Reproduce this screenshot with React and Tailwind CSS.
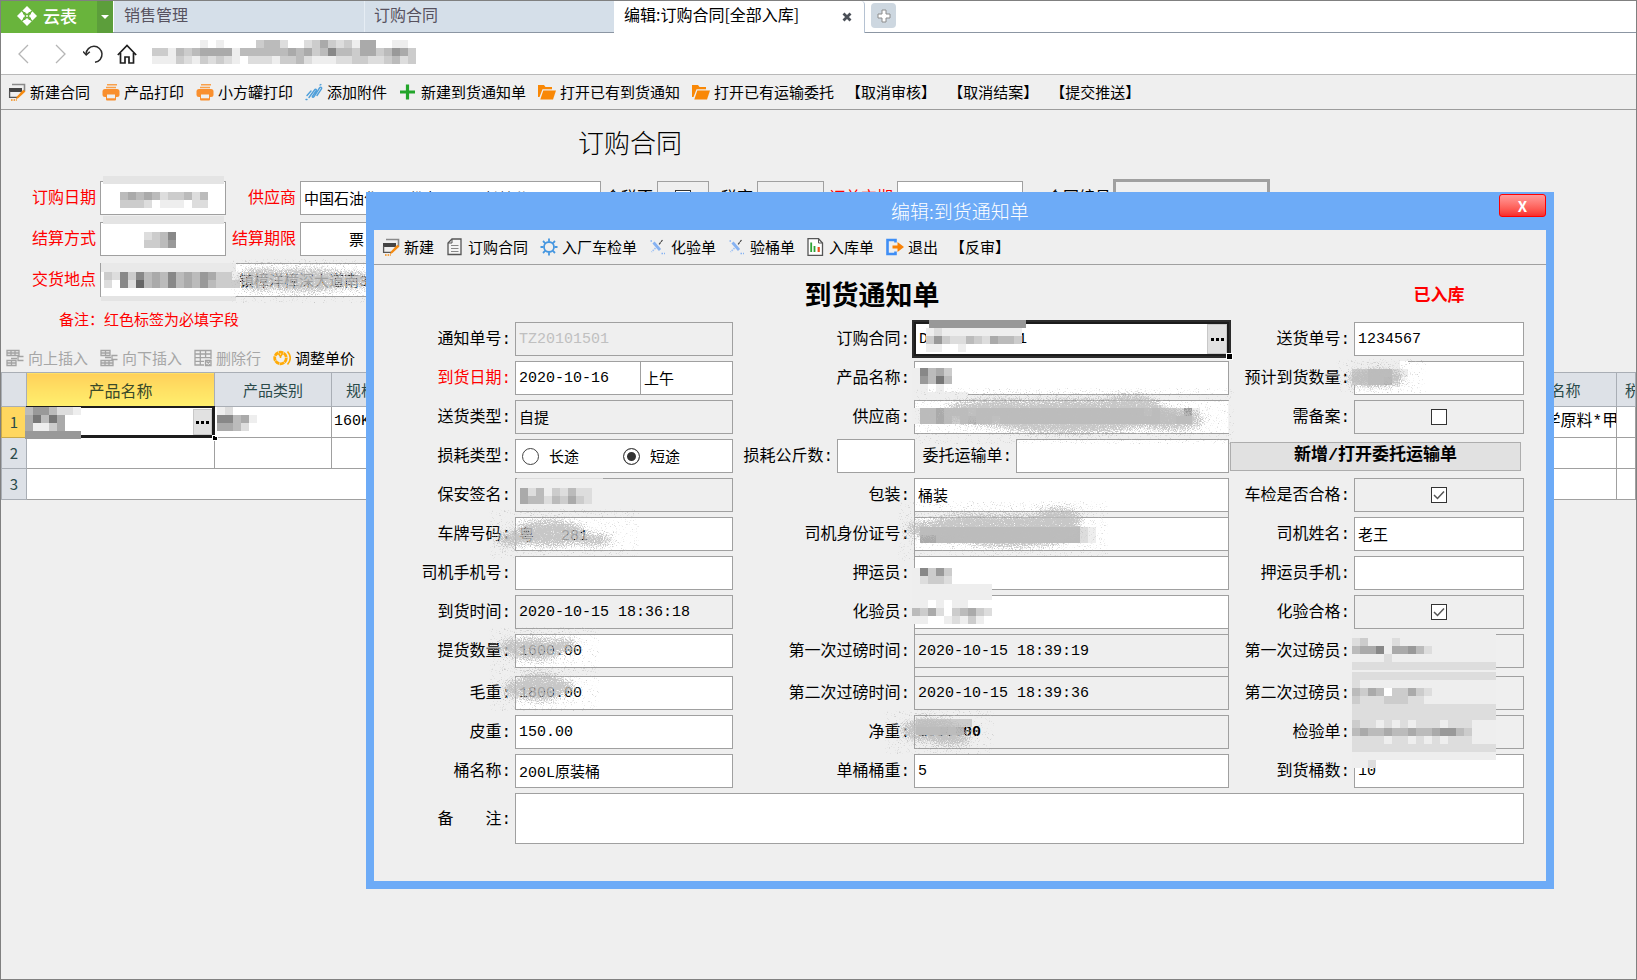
import React, { useId } from 'react';
import clsx from 'clsx';

const SANS = "font-['Noto_Sans_CJK_SC',sans-serif]";
const MONO = "font-['Liberation_Mono','Noto_Sans_CJK_SC',monospace]";

/* ---------- icons ---------- */

function EditIcon() {
  return (
    <svg viewBox="0 0 18 18" className="size-[18px] shrink-0">
      <path d="M4 1.5h12.5V8" fill="none" stroke="#8a8a8a" strokeWidth="1.6" />
      <path d="M1 5h13v4H1z" fill="#444" />
      <path d="M1.6 8v6.4H9M13.4 8v1.5" fill="none" stroke="#555" strokeWidth="1.3" />
      <path d="M17.500 8.500l-7 6.500-2.500 1.200.9-2.800L15.300 6.700z" fill="#f58a10" />
      <path d="M3 17h6" stroke="#f58a10" strokeWidth="1.4" strokeDasharray="1.6 1" />
    </svg>
  );
}

function PrinterIcon() {
  return (
    <svg viewBox="0 0 18 18" className="size-[18px] shrink-0">
      <path d="M5 1.7h10M4 4.5h10" stroke="#f9a04a" strokeWidth="1.4" />
      <rect x="0.5" y="6" width="17" height="8" rx="2.5" fill="#f98f2e" />
      <rect x="4" y="10" width="10" height="7.5" rx="1" fill="#f98f2e" />
      <path d="M5 11.5h8v3.8H5z" fill="#efefef" />
    </svg>
  );
}

function ClipIcon() {
  return (
    <svg viewBox="0 0 18 18" className="size-[18px] shrink-0" fill="none" stroke="#4f9fda" strokeWidth="1.4" strokeLinecap="round">
      <path d="M2 12.5L6 8M4 14.5L9.500 7c1-1.500 2.500-.5 1.500 1L7.500 13c-.6 1.200.6 1.800 1.400.8L14.500 5c1-1.500 2.800-.4 1.800 1.200L12 12.500" />
      <path d="M1 16.5h2M15 2l1.500-.8" strokeDasharray="1 1.5" />
    </svg>
  );
}

function PlusIcon() {
  return (
    <svg viewBox="0 0 18 18" className="size-[18px] shrink-0">
      <path d="M8.500 1.500v15M1 9h15" stroke="#22a52a" strokeWidth="3.200" />
    </svg>
  );
}

function FolderIcon() {
  return (
    <svg viewBox="0 0 18 18" className="size-[18px] shrink-0" fill="#f98806">
      <path d="M0 2h6l1.500 2H14v2.200H4.500L1.500 14H0z" />
      <path d="M5.300 7.500H18l-3 9H2.300z" />
    </svg>
  );
}

function SheetIcon() {
  return (
    <svg viewBox="0 0 18 18" className="size-[18px] shrink-0" fill="none">
      <path d="M6 1h9v15.500H2V5z" fill="#f4f4f4" stroke="#555" strokeWidth="1.300" />
      <path d="M6 1v4H2" stroke="#555" />
      <path d="M5 7.500h7.500M5 10.500h7.500M5 13.500h7.500" stroke="#888" />
    </svg>
  );
}

function GearIcon() {
  return (
    <svg viewBox="0 0 18 18" className="size-[18px] shrink-0" fill="none" stroke="#4697e0">
      <circle cx="9" cy="9" r="5" strokeWidth="1.800" />
      <path d="M9 0.500v3M9 14.500v3M0.500 9h3M14.500 9h3M3 3l2.300 2.300M12.700 12.700L15 15M15 3l-2.300 2.300M5.300 12.700L3 15" strokeWidth="1.800" />
    </svg>
  );
}

function ToolsIcon() {
  return (
    <svg viewBox="0 0 18 18" className="size-[18px] shrink-0" fill="none">
      <path d="M4.500 4.500l6.500 7.500" stroke="#86b2f2" strokeWidth="2.800" />
      <path d="M13.500 2L10 6.500" stroke="#444" strokeWidth="1.200" strokeDasharray="2.500 .5" />
      <path d="M6.500 10L2.500 14" stroke="#9ec1f3" strokeWidth="1.600" strokeDasharray="1.500 1" />
      <path d="M1.500 3h2.500M12.500 15.500h3.500" stroke="#86b2f2" strokeWidth="1.400" strokeDasharray="1.500 1" />
    </svg>
  );
}

function ReportIcon() {
  return (
    <svg viewBox="0 0 18 18" className="size-[18px] shrink-0" fill="none">
      <path d="M1 .700h10.500L15.500 5v12.300H1z" fill="#fff" stroke="#555" strokeWidth="1.300" />
      <path d="M11.500 .700V5h4" stroke="#555" />
      <path d="M4.200 4.500V14M7.500 8v6" stroke="#2da336" strokeWidth="1.800" />
      <path d="M11.700 9v5" stroke="#e8501c" strokeWidth="2.200" />
    </svg>
  );
}

function ExitIcon() {
  return (
    <svg viewBox="0 0 18 18" className="size-[18px] shrink-0">
      <path d="M9.500 4.500V2H1.500v14h8v-2.500" fill="none" stroke="#3f8ef5" strokeWidth="2.600" />
      <path d="M6.500 7.500h5V4L18 9l-6.500 5v-3.500h-5z" fill="#f98206" />
    </svg>
  );
}

function InsertIcon({ flip }) {
  return (
    <svg viewBox="0 0 18 18" className={clsx('size-[18px] shrink-0', flip && '-scale-y-100')} fill="none" stroke="#a3a3a3" strokeWidth="1.300">
      <path d="M1 1.500h12v5H1zM1 4h12M5 1.500v5M9 1.500v5M1 11.500h9v5H1zM1 14h9M5.500 11.500v5M17.500 7.500H12v4h5.500M11 9.500H5" />
    </svg>
  );
}

function DeleteRowIcon() {
  return (
    <svg viewBox="0 0 18 18" className="size-[18px] shrink-0" fill="none" stroke="#a3a3a3" strokeWidth="1.300">
      <path d="M10 16H1V1.500h16V10M1 5h16M1 8.700h16M1 12.400h9M6.300 1.500V16M11.600 1.500V9" />
      <path d="M11.500 11.500h5.500v5h-5.500zM12.500 12.500l3.500 3M16 12.500l-3.500 3" />
    </svg>
  );
}

function CoinIcon() {
  return (
    <svg viewBox="0 0 18 18" className="size-[18px] shrink-0" fill="none" stroke="#ffab08">
      <circle cx="7.500" cy="9" r="5.800" strokeWidth="2.800" strokeDasharray="4.500 .5" />
      <path d="M5.500 4.500L7.500 7.500l2-3M7.500 7v2" strokeWidth="1.600" />
      <path d="M14.500 2.500c3.400 4 3.400 9 0 13" strokeWidth="1.600" />
    </svg>
  );
}

function LogoIcon() {
  return (
    <svg viewBox="0 0 20 20" className="size-5">
      <path d="M10 0l10 10-10 10L0 10z" fill="#fff" />
      <g fill="none" stroke="#69b43c" strokeWidth="1.400">
        <path d="M7.500 6a2.500 2.500 0 0 0 5 0M7.500 14a2.500 2.500 0 0 1 5 0" />
        <path d="M6 7.500a2.500 2.500 0 0 1 0 5M14 7.500a2.500 2.500 0 0 0 0 5" />
        <path d="M5 5l3 3M15 5l-3 3M5 15l3-3M15 15l-3-3" />
      </g>
    </svg>
  );
}

/* ---------- masked values ---------- */

// One hex digit per 8px tile, "." leaves the tile clear.
function Mosaic({ rows, className }) {
  const width = Math.max(...rows.map((row) => row.length)) * 8;
  return (
    <svg
      aria-hidden="true"
      width={width}
      height={rows.length * 8}
      shapeRendering="crispEdges"
      className={clsx('pointer-events-none absolute max-w-none', className)}
    >
      {rows.map((row, y) =>
        [...row].map((c, x) =>
          c === '.' ? null : <rect key={`${x}-${y}`} x={x * 8} y={y * 8} width="8" height="8" fill={`#${c}${c}${c}`} />
        )
      )}
    </svg>
  );
}

function Smudge({ width, height, blobs, className }) {
  const id = useId();
  return (
    <svg aria-hidden="true" width={width} height={height} className={clsx('pointer-events-none absolute max-w-none', className)}>
      <filter id={id} x="0" y="0" width={width} height={height} filterUnits="userSpaceOnUse">
        <feGaussianBlur in="SourceAlpha" stdDeviation="5" result="soft" />
        <feTurbulence type="fractalNoise" baseFrequency="0.9" numOctaves="2" />
        <feColorMatrix values="0 0 0 0 0  0 0 0 0 0  0 0 0 0 0  1 0 0 0 0" result="noise" />
        <feComposite in="soft" in2="noise" operator="arithmetic" k2="2" k3="4" k4="-2.500" result="grain" />
        <feFlood floodColor="#bdbdbd" floodOpacity="0.85" />
        <feComposite in2="grain" operator="in" />
      </filter>
      <g filter={`url(#${id})`}>
        {blobs.map(([cx, cy, rx, ry]) => (
          <ellipse key={`${cx}-${cy}`} cx={cx} cy={cy} rx={rx} ry={ry} />
        ))}
      </g>
    </svg>
  );
}

function Band({ className }) {
  return <span aria-hidden="true" className={clsx('pointer-events-none absolute', className)} />;
}

/* ---------- form parts ---------- */

const boxStyle = 'border border-[#a0a0a0] h-[34px]';

function Label({ htmlFor, required, children, className }) {
  return (
    <label
      htmlFor={htmlFor}
      className={clsx('self-center whitespace-pre pr-1 pt-[2px] text-right text-[16px] leading-5', MONO, required && 'text-[#ff0000]', className)}
    >
      {children}
    </label>
  );
}

function Field({ label, value = '', readOnly, required, faded, bold, joined, active, thick, children }) {
  const id = useId();
  return (
    <>
      <Label htmlFor={id} required={required}>{label}</Label>
      <div
        className={clsx(
          'relative flex min-w-0',
          joined === 'near' && 'after:absolute after:inset-x-0 after:top-full after:h-[5px] after:border-x after:border-[#a0a0a0]',
          joined === 'far' && 'after:absolute after:inset-x-0 after:top-full after:h-[8px] after:border-x after:border-[#a0a0a0]'
        )}
      >
        <input
          id={id}
          defaultValue={value}
          readOnly={readOnly}
          className={clsx(
            'w-full h-[34px] min-w-0 px-[3px] text-[15px] outline-none',
            MONO,
            active ? 'border-2 border-[#1c1c1c] ring-2 ring-[#2c2c2c]' : 'border border-[#a0a0a0]',
            readOnly ? 'bg-[#efefef]' : 'bg-white',
            faded && 'text-[#c0c0c0]',
            bold && 'font-bold',
            thick && 'ring-2 ring-[#a0a0a0]'
          )}
        />
        {children}
      </div>
    </>
  );
}

function CheckBox({ id, checked }) {
  return (
    <span className="relative flex size-4">
      <input id={id} type="checkbox" defaultChecked={checked} className="peer size-4 appearance-none border border-[#333] bg-white" />
      <svg viewBox="0 0 16 16" className="pointer-events-none absolute inset-0 hidden size-4 peer-checked:block">
        <path d="M3 8l3.500 3.500L13 4.500" fill="none" stroke="#555" strokeWidth="1.500" />
      </svg>
    </span>
  );
}

function CheckField({ label, checked }) {
  const id = useId();
  return (
    <>
      <Label htmlFor={id}>{label}</Label>
      <div className={clsx('flex items-center justify-center', boxStyle)}>
        <CheckBox id={id} checked={checked} />
      </div>
    </>
  );
}

function Row({ className, children }) {
  return (
    <div className={clsx('grid grid-cols-[141px_218fr_181px_315fr_125px_170fr]', className)}>
      {children}
    </div>
  );
}

function EllipsisButton({ className }) {
  return (
    <button
      type="button"
      aria-label="选择"
      className={clsx('absolute flex items-center justify-center gap-[2px] border border-[#c8c8c8] bg-[#e1e1e1]', className)}
    >
      <i className="size-[3px] bg-black" />
      <i className="size-[3px] bg-black" />
      <i className="size-[3px] bg-black" />
    </button>
  );
}

function Toolbar({ items, className }) {
  return (
    <div className={clsx('flex items-center gap-3', className)}>
      {items.map(({ text, icon, disabled }) => (
        <button
          key={text}
          type="button"
          disabled={disabled}
          className={clsx('flex items-center gap-1 whitespace-nowrap text-[15px] leading-5', disabled && 'text-[#a6a6a6]')}
        >
          {icon}
          {text}
        </button>
      ))}
    </div>
  );
}

const contractTools = [
  { text: '新建合同', icon: <EditIcon /> },
  { text: '产品打印', icon: <PrinterIcon /> },
  { text: '小方罐打印', icon: <PrinterIcon /> },
  { text: '添加附件', icon: <ClipIcon /> },
  { text: '新建到货通知单', icon: <PlusIcon /> },
  { text: '打开已有到货通知', icon: <FolderIcon /> },
  { text: '打开已有运输委托', icon: <FolderIcon /> },
  { text: '【取消审核】' },
  { text: '【取消结案】' },
  { text: '【提交推送】' },
];

const rowTools = [
  { text: '向上插入', icon: <InsertIcon />, disabled: true },
  { text: '向下插入', icon: <InsertIcon flip />, disabled: true },
  { text: '删除行', icon: <DeleteRowIcon />, disabled: true },
  { text: '调整单价', icon: <CoinIcon /> },
];

const noticeTools = [
  { text: '新建', icon: <EditIcon /> },
  { text: '订购合同', icon: <SheetIcon /> },
  { text: '入厂车检单', icon: <GearIcon /> },
  { text: '化验单', icon: <ToolsIcon /> },
  { text: '验桶单', icon: <ToolsIcon /> },
  { text: '入库单', icon: <ReportIcon /> },
  { text: '退出', icon: <ExitIcon /> },
  { text: '【反审】' },
];

/* ---------- page sections ---------- */

function TabBar() {
  return (
    <div className="flex h-8 text-[16px]">
      <button type="button" className="flex w-24 items-center gap-[6px] bg-[#69b43c] pb-[2px] pl-4 text-[17px] font-medium text-white">
        <LogoIcon />
        云表
      </button>
      <button type="button" aria-label="菜单" className="flex w-4 items-center justify-center bg-[#5c9e3b]">
        <i className="border-x-[4px] border-t-[4px] border-x-transparent border-t-white" />
      </button>
      <div className="flex flex-1 border-b border-[#8c96a3]">
        <a href="#sales" className="ml-px flex w-[250px] items-center bg-[#d5dfe9] pl-[10px] pb-[6px] text-[#57525f]">销售管理</a>
        <a href="#contract" className="flex w-[250px] items-center border-l border-[#e6edf4] bg-[#d5dfe9] pl-[9px] pb-[6px] text-[#57525f]">订购合同</a>
        <div className="-mb-px flex w-[251px] items-center justify-between rounded-tr border-r border-[#b5c2d2] bg-white pb-[6px] pl-[10px] pr-3">
          <a href="#edit">编辑:订购合同[全部入库]</a>
          <button type="button" aria-label="关闭标签" className="mt-[6px]">
            <svg viewBox="0 0 10 10" className="size-[10px]">
              <path d="M1.500 1.500l7 7M8.500 1.500l-7 7" stroke="#4a4f57" strokeWidth="2.800" />
            </svg>
          </button>
        </div>
        <button type="button" aria-label="新标签" className="ml-[6px] mt-[2px] flex size-[25px] items-center justify-center rounded bg-[#cdd7e0]">
          <svg viewBox="0 0 14 14" className="size-[14px]">
            <path d="M5 1h4v4h4v4H9v4H5V9H1V5h4z" fill="#fff" stroke="#8c8c8c" />
          </svg>
        </button>
      </div>
    </div>
  );
}

function AddressBar() {
  return (
    <div className="relative flex h-[42px] items-center border-b border-[#b9b9b9]">
      <button type="button" aria-label="后退" className="ml-4">
        <svg viewBox="0 0 12 20" className="h-5 w-3" fill="none" stroke="#b5b5b5" strokeWidth="1.300">
          <path d="M11 1L2 10l9 9" />
        </svg>
      </button>
      <button type="button" aria-label="前进" className="ml-[26px]">
        <svg viewBox="0 0 12 20" className="h-5 w-3" fill="none" stroke="#b5b5b5" strokeWidth="1.300">
          <path d="M1 1l9 9-9 9" />
        </svg>
      </button>
      <button type="button" aria-label="刷新" className="ml-4">
        <svg viewBox="0 0 20 20" className="size-5" fill="none" stroke="#2b2b2b" strokeWidth="1.500">
          <path d="M3 10a8 8 0 1 1 9 8.300" />
          <path d="M0 7.500L3.200 11 6.800 7.800" />
        </svg>
      </button>
      <button type="button" aria-label="主页" className="ml-[14px]">
        <svg viewBox="0 0 20 20" className="size-5" fill="none" stroke="#1f1f1f" strokeWidth="1.700">
          <path d="M.800 11L10 1.500 19.200 11M3.500 9v10H8v-6h4v6h4.500V9" />
        </svg>
      </button>
      <Mosaic
        className="left-[151px] top-[7px]"
        rows={[
          'ffffffefeffffcbbdffdcacdceaaffeef',
          'ccebcbaaaaebbbbbbabacb8bbcaacb9ac',
          'eeecdecdcdefdddeccbdeeeddccddcbdc',
        ]}
      />
    </div>
  );
}

function ContractForm() {
  return (
    <div>
      <h1 className="mt-[17px] mb-[24px] w-[1258px] text-center text-[26px] font-light leading-[30px]">订购合同</h1>
      <div className="flex flex-col gap-[7px]">
        <div className="grid grid-cols-[99px_126px_74px_301px_56px_52px_48px_67px_73px_126px_92px_153px]">
          <Field label="订购日期" required>
            <Band className="-top-[5px] left-[3px] h-2 w-[121px] bg-[#e4e4e4]" />
            <Mosaic className="left-5 top-[11px]" rows={['bababdccbdb', 'cccdfeeefdd']} />
          </Field>
          <Field label="供应商" required value="中国石油化工股份有限公司长岭分公司" />
          <CheckField label="含税否" />
          <Field label="税率" readOnly />
          <Field label="订单交期" required />
          <Field label="合同编号" readOnly thick />
        </div>
        <div className="grid grid-cols-[99px_126px_74px_301px]">
          <Field label="结算方式" required>
            <Band className="-top-[6px] left-[3px] h-2 w-[121px] bg-[#e4e4e4]" />
            <Mosaic className="left-11 top-[10px]" rows={['dcb8f', 'ccb9f']} />
          </Field>
          <Field label="结算期限" required value="     票" />
        </div>
        <div className="grid grid-cols-[99px_501px]">
          <Field label="交货地点" required value="　　　　　　　　　镇樟洋樟深大道南3">
            <Band className="top-0 left-px h-[9px] w-[135px] bg-[#e9e9e9]" />
            <Mosaic className="left-1 top-[9px]" rows={['cd8c8bab8bab9acce', 'df8d6bab8bab9bccc']} />
            <Band className="top-[33px] left-px h-[5px] w-[135px] bg-[#e4e4e4]" />
            <Smudge width={150} height={44} className="-top-1 left-[130px]" blobs={[[30, 20, 22, 11], [75, 21, 52, 11], [125, 21, 16, 8]]} />
          </Field>
        </div>
      </div>
      <p className="mt-3 pl-[58px] text-[15px] leading-5 text-[#ff0000]">备注：红色标签为必填字段</p>
      <Toolbar items={rowTools} className="mt-[15px] h-7 pl-[5px]" />
    </div>
  );
}

function ProductTable() {
  const headColors = 'border border-[#a9aeb5] bg-[#dde1e7] p-0 font-normal text-[#2b4a4a]';
  const head = clsx('h-[34px]', headColors);
  const rowHead = clsx('h-[31px]', headColors, SANS);
  const cell = 'h-[31px] border border-[#a0a0a0] bg-white p-0';
  return (
    <table className="w-full table-fixed border-collapse text-[15px] leading-5">
      <colgroup>
        <col className="w-[25px]" />
        <col className="w-[188px]" />
        <col className="w-[117px]" />
        <col className="w-[120px]" />
        <col />
        <col className="w-[132px]" />
        <col className="w-[19px]" />
      </colgroup>
      <thead>
        <tr>
          <th className={head} />
          <th className="h-[34px] border border-[#a9aeb5] bg-gradient-to-b from-[#ffd05a] to-[#fff06e] p-0 text-[16px] font-normal text-[#3a4a2a]">产品名称</th>
          <th className={head}>产品类别</th>
          <th className={clsx(head, 'pl-[14px] text-left')}>规格</th>
          <th className={head} />
          <th className={head}>税收名称</th>
          <th className={clsx(head, 'overflow-hidden whitespace-nowrap pl-2 text-left')}>税率</th>
        </tr>
      </thead>
      <tbody className={MONO}>
        <tr>
          <th className={clsx('h-[31px] border border-[#c9a94a] bg-[#ffd75f] p-0 font-normal text-[#2b4a4a]', SANS)}>1</th>
          <td className={clsx(cell, 'relative')}>
            <span className="absolute -inset-px border-2 border-l-0 border-b-[3px] border-r-[3px] border-[#1c1c1c]" />
            <EllipsisButton className="right-0.5 top-0.5 bottom-0.5 w-[19px]" />
            <Mosaic className="-left-[2px] top-0" rows={['b99bdde', 'a7b7aff', 'aeecaff', '9999999']} />
            <span className="absolute -right-1 -bottom-1 size-[6px] border border-white bg-black" />
          </td>
          <td className={clsx(cell, 'relative')}>
            <Mosaic className="left-[2px] top-0" rows={['edfff', '88bae', 'aabdf']} />
          </td>
          <td className={clsx(cell, 'pl-[2px]')}>160KG</td>
          <td className={cell} />
          <td className={clsx(cell, 'overflow-hidden whitespace-nowrap pl-[2px] text-[16px]')}>*有机化学原料*甲醇</td>
          <td className={cell} />
        </tr>
        <tr>
          <th className={rowHead}>2</th>
          <td className={cell} />
          <td className={cell} />
          <td className={cell} />
          <td className={cell} />
          <td className={cell} />
          <td className={cell} />
        </tr>
        <tr>
          <th className={rowHead}>3</th>
          <td colSpan={5} className={cell} />
          <td className={cell} />
        </tr>
      </tbody>
    </table>
  );
}

function LossRow() {
  const weightId = useId();
  const orderId = useId();
  return (
    <Row>
      <Label>损耗类型:</Label>
      <div role="radiogroup" aria-label="损耗类型" className={clsx('flex items-center bg-white pl-[6px] text-[15px]', boxStyle)}>
        {['长途', '短途'].map((name) => (
          <label key={name} className="flex w-[101px] items-center gap-[10px]">
            <input
              type="radio"
              name="distance"
              defaultChecked={name === '短途'}
              className="size-[17px] appearance-none rounded-full border border-[#444] bg-white checked:bg-[#333] checked:shadow-[inset_0_0_0_3px_#fff]"
            />
            {name}
          </label>
        ))}
      </div>
      <div className="flex">
        <Label htmlFor={weightId} className="w-[104px]">损耗公斤数:</Label>
        <input id={weightId} className={clsx('-mr-px min-w-0 flex-1 bg-white', boxStyle)} />
      </div>
      <div className="flex">
        <Label htmlFor={orderId} className="w-[102px]">委托运输单:</Label>
        <input id={orderId} className={clsx('min-w-0 flex-1 bg-white', boxStyle)} />
      </div>
      <button
        type="button"
        className={clsx('col-span-2 ml-px mr-[3px] h-[29px] self-center border border-[#adadad] bg-[#e1e1e1] text-[17px] font-bold leading-5', MONO)}
      >
        新增/打开委托运输单
      </button>
    </Row>
  );
}

function NoticeDialog() {
  const remarkId = useId();
  return (
    <section
      role="dialog"
      aria-labelledby="notice-title"
      className="absolute left-[365px] right-[82px] top-[191px] bg-[#6dabf7] px-2 pb-2"
    >
      <header className="relative flex h-[38px] items-center justify-center">
        <h2 id="notice-title" className="text-[19px] font-light text-white">编辑:到货通知单</h2>
        <button
          type="button"
          aria-label="关闭"
          className="absolute right-0 top-0.5 h-[23px] w-[47px] rounded-[3px] border border-[#ff0000] bg-gradient-to-b from-[#ff9a9a] to-[#f92a2a] text-[15px] font-bold leading-5 text-white"
        >
          X
        </button>
      </header>
      <div className="bg-[#efefef]">
        <Toolbar items={noticeTools} className="h-[35px] border-b border-[#a0a0a0] pl-2" />
        <form className="flex flex-col gap-[5px] pr-[22px] pt-[6px] pb-[37px]">
          <Row>
            <h3 className="col-span-3 col-start-2 h-[46px] text-center text-[27px] font-bold leading-[46px]">到货通知单</h3>
            <p className="col-start-6 text-center text-[17px] font-bold leading-[46px] text-[#ff0000]">已入库</p>
          </Row>
          <Row>
            <Field label="通知单号:" value="TZ20101501" readOnly faded />
            <Field label="订购合同:" value="DC         1" active>
              <Band className="-top-[2px] left-[15px] h-2 w-[97px] bg-[#989898]" />
              <Mosaic className="left-[12px] top-[6px]" rows={['edeeeeeeeeee', 'c9cddbcdabbc', 'eeffefffffff']} />
              <EllipsisButton className="right-[2px] top-[2px] bottom-[2px] w-5" />
              <span className="absolute -right-1 -bottom-1 size-[7px] border border-white bg-black" />
            </Field>
            <Field label="送货单号:" value="1234567" />
          </Row>
          <Row>
            <Label htmlFor="arrive-date" required>到货日期:</Label>
            <div className="grid grid-cols-[125fr_93fr]">
              <input id="arrive-date" defaultValue="2020-10-16" className={clsx('min-w-0 border-r-0 bg-white px-[3px] text-[15px]', boxStyle, MONO)} />
              <input aria-label="时段" defaultValue="上午" className={clsx('min-w-0 bg-white px-[3px] text-[15px]', boxStyle, MONO)} />
            </div>
            <Field label="产品名称:">
              <Mosaic className="-left-[2px] top-[7px]" rows={['e8bac', 'e9b7b', 'eefef', 'eeeeeee']} />
            </Field>
            <Field label="预计到货数量:">
              <Mosaic className="-left-[2px] top-0" rows={['eeeeeef', 'ccbbbde', 'ccbbaef']} />
              <Smudge width={90} height={34} className="-left-[18px] -top-[2px]" blobs={[[40, 19, 30, 9]]} />
            </Field>
          </Row>
          <Row>
            <Field label="送货类型:" value="自提" readOnly />
            <Field label="供应商:">
              <Mosaic
                className="-left-[2px] top-[8px]"
                rows={['ebbabbbcbbbbbbbbbbbbbbbbbbbbbcbccd9e', 'ebbabcbabbcbbbbbbbbbbbbbbbbbbbbccbbf']}
              />
              <Smudge width={320} height={56} className="-top-3 left-0" blobs={[[85, 24, 55, 13], [155, 28, 95, 17], [215, 22, 35, 15], [255, 32, 36, 10]]} />
              <Band className="right-0 top-px h-8 w-px bg-[#f4f4f4]" />
            </Field>
            <CheckField label="需备案:" />
          </Row>
          <LossRow />
          <Row>
            <Field label="保安签名:" readOnly>
              <Band className="left-[2px] top-0 h-px w-[86px] bg-[#dcdcdc]" />
              <Mosaic className="left-[5px] top-[10px]" rows={['adbecdbdd', 'abbdbcacd']} />
            </Field>
            <Field label="包装:" value="桶装" joined="near" />
            <CheckField label="车检是否合格:" checked />
          </Row>
          <Row>
            <Field label="车牌号码:" value="粤   281">
              <Smudge width={150} height={50} className="-left-[26px] -top-2" blobs={[[60, 24, 36, 13], [24, 30, 18, 7], [104, 31, 20, 6]]} />
            </Field>
            <Field label="司机身份证号:" joined="near">
              <Mosaic className="left-[6px] top-[10px]" rows={['bbbbbbbbbbbbbbbbbbbbde', 'aabbbbbbbbbbbbbbbbbbde']} />
              <Smudge width={210} height={60} className="-left-4 -top-4" blobs={[[75, 26, 48, 13], [115, 30, 66, 16], [160, 18, 24, 11], [24, 28, 16, 8]]} />
            </Field>
            <Field label="司机姓名:" value="老王" />
          </Row>
          <Row>
            <Field label="司机手机号:" />
            <Field label="押运员:">
              <Mosaic className="-left-[2px] top-[12px]" rows={['e8c9c', 'edccd', 'eeeeeeeeee', 'eeeeeeeeee']} />
            </Field>
            <Field label="押运员手机:" />
          </Row>
          <Row>
            <Field label="到货时间:" value="2020-10-15 18:36:18" readOnly />
            <Field label="化验员:" joined="near">
              <Band className="-left-[2px] -top-[5px] h-[10px] w-20 bg-[#eeeeee]" />
              <Mosaic className="-left-[2px] top-[5px]" rows={['eefefeefff', 'bcadfcbacd', 'eeffedecef']} />
            </Field>
            <CheckField label="化验合格:" checked />
          </Row>
          <Row>
            <Field label="提货数量:" value="1600.00">
              <Smudge width={110} height={44} className="-left-[26px] -top-[7px]" blobs={[[46, 22, 28, 11], [24, 20, 14, 8], [76, 18, 12, 7]]} />
            </Field>
            <Field label="第一次过磅时间:" value="2020-10-15 18:39:19" readOnly joined="far" />
            <Field label="第一次过磅员:" readOnly>
              <Mosaic
                className="-left-[2px] -top-[4px]"
                rows={['eeeeeeeeeeeeeeeeee', 'dceeedeeeeeeeeeeee', 'baa8eaa9bdeeeeeeee', 'eeeedeeeeeeeeeeeee', 'dddddddddddddddddd']}
              />
            </Field>
          </Row>
          <Row className="pt-[3px]">
            <Field label="毛重:" value="1800.00">
              <Smudge width={110} height={44} className="-left-[26px] -top-[9px]" blobs={[[50, 20, 26, 14], [26, 22, 12, 8], [76, 20, 10, 7]]} />
            </Field>
            <Field label="第二次过磅时间:" value="2020-10-15 18:39:36" readOnly />
            <Field label="第二次过磅员:" readOnly>
              <Mosaic
                className="-left-[2px] -top-1"
                rows={['dddddddddddddddddd', 'deeeeeeeeeeeeeeeee', 'bcabfccacdeeeeeeee', 'cdddcccddeeeeeeeee', 'dddddddddddddddddd']}
              />
            </Field>
          </Row>
          <Row>
            <Field label="皮重:" value="150.00" />
            <Field label="净重:" value="1650.00" readOnly bold>
              <Mosaic className="left-[2px] top-[4px]" rows={['ccccccc', 'bbbaba']} />
              <Smudge width={110} height={44} className="-left-[30px] -top-[5px]" blobs={[[46, 20, 30, 11], [66, 27, 22, 8]]} />
            </Field>
            <Field label="检验单:" readOnly>
              <Mosaic
                className="-left-[2px] -top-[3px]"
                rows={['dddddddddddddddddd', 'cddedededddedddeee', 'babbabbabba99bceee', 'ddddeddedededddeee', 'dddddddddddddddddd']}
              />
            </Field>
          </Row>
          <Row>
            <Field label="桶名称:" value="200L原装桶" />
            <Field label="单桶桶重:" value="5" />
            <Field label="到货桶数:" value="10">
              <Mosaic className="-left-[2px] -top-[2px]" rows={['eeeeeeeeeeeeeeeeee', 'eed']} />
            </Field>
          </Row>
          <Row>
            <Label htmlFor={remarkId}>备　　注:</Label>
            <textarea id={remarkId} className="col-span-5 block h-[51px] w-full resize-none border border-[#a0a0a0] bg-white" />
          </Row>
        </form>
      </div>
    </section>
  );
}

export default function App() {
  return (
    <div className={clsx('relative flex min-h-screen flex-col overflow-hidden border border-[#808080] bg-[#efefef] text-black', SANS)}>
      <div className="bg-white">
        <TabBar />
        <AddressBar />
      </div>
      <Toolbar items={contractTools} className="h-[35px] border-b border-[#9c9c9c] pl-[7px]" />
      <ContractForm />
      <ProductTable />
      <NoticeDialog />
    </div>
  );
}
